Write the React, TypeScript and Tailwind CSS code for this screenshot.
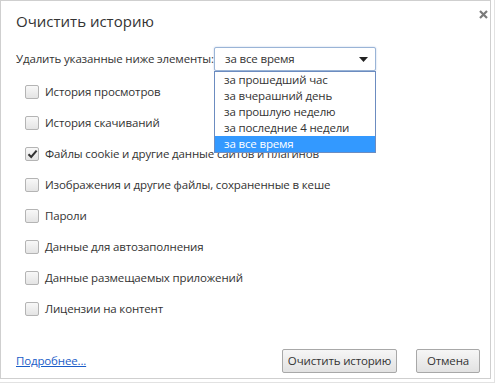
import React, { useState } from "react";

const items: { label: string; checked: boolean }[] = [
  { label: "История просмотров", checked: false },
  { label: "История скачиваний", checked: false },
  { label: "Файлы cookie и другие данные сайтов и плагинов", checked: true },
  { label: "Изображения и другие файлы, сохраненные в кеше", checked: false },
  { label: "Пароли", checked: false },
  { label: "Данные для автозаполнения", checked: false },
  { label: "Данные размещаемых приложений", checked: false },
  { label: "Лицензии на контент", checked: false },
];

const periods = [
  "за прошедший час",
  "за вчерашний день",
  "за прошлую неделю",
  "за последние 4 недели",
  "за все время",
];

const Checkbox: React.FC<{ checked: boolean; onToggle: () => void }> = ({
  checked,
  onToggle,
}) => (
  <button
    type="button"
    onClick={onToggle}
    className="flex h-[14px] w-[14px] shrink-0 items-center justify-center rounded-[2px] border border-[#b4b4b4] bg-gradient-to-b from-[#f8f8f8] to-[#e4e4e4]"
  >
    {checked && (
      <svg width="11" height="10" viewBox="0 0 11 10">
        <path
          d="M1.5 5.2 L4.2 8 L9.6 1.6"
          fill="none"
          stroke="#333"
          strokeWidth="2"
        />
      </svg>
    )}
  </button>
);

export default function App() {
  const [checks, setChecks] = useState<boolean[]>(items.map((i) => i.checked));

  return (
    <div
      className="h-[384px] w-[496px] bg-white text-[#333]"
      style={{ fontFamily: '"Open Sans", "Noto Sans", sans-serif' }}
    >
      <div className="relative h-[383px] w-[495px] border-r border-b border-[#e2e2e2]">
        <div className="relative flex h-[379px] w-[491px] flex-col border border-[#cfcfcf] pl-[15px] pr-[10px] tracking-[-0.15px]">
          <button className="absolute right-[2px] top-[9px]">
            <svg width="9" height="9" viewBox="0 0 9 9">
              <path d="M1 1 L8 8 M8 1 L1 8" stroke="#7a7a7a" strokeWidth="2.2" />
            </svg>
          </button>

          <h1 className="mt-[9px] whitespace-nowrap text-[15px] leading-[22px] tracking-normal text-[#333]">
            Очистить историю
          </h1>

          <div className="mt-[15px] flex items-center whitespace-nowrap text-[11.5px]">
            <span className="w-[198px]">Удалить указанные ниже элементы:</span>
            <div className="relative">
              <div className="flex h-[24px] w-[162px] items-center justify-between rounded-[2px] border border-[#9ab4d6] bg-white pl-[10px] pr-[7px] shadow-[0_0_2px_#b8cbe6]">
                <span>за все время</span>
                <svg width="9" height="5" viewBox="0 0 9 5">
                  <path d="M0 0 H9 L4.5 5 Z" fill="#222" />
                </svg>
              </div>
              <ul className="absolute left-0 top-[24px] z-10 w-[162px] border border-[#6c8cc0] bg-white text-[11.5px] leading-[16px]">
                {periods.map((p, i) => (
                  <li
                    key={p}
                    className={
                      i === periods.length - 1
                        ? "bg-[#3399ff] pl-[9px] text-white"
                        : "pl-[9px] text-[#333]"
                    }
                  >
                    {p}
                  </li>
                ))}
              </ul>
            </div>
          </div>

          <div className="mt-[5px] flex flex-col pl-[9px]">
            {items.map((it, i) => (
              <div
                key={it.label}
                className="flex h-[31px] items-center gap-[6px] whitespace-nowrap text-[11.5px]"
              >
                <Checkbox
                  checked={checks[i]}
                  onToggle={() =>
                    setChecks((c) => c.map((v, j) => (j === i ? !v : v)))
                  }
                />
                <span>{it.label}</span>
              </div>
            ))}
          </div>

          <div className="mt-auto mb-[5px] flex items-center justify-between">
            <a href="#" className="text-[11.5px] text-[#1a5dc8] underline">
              Подробнее...
            </a>
            <div className="flex gap-[19px]">
              <button className="h-[24px] w-[115px] whitespace-nowrap rounded-[2px] border border-[#a8a8a8] bg-gradient-to-b from-[#f6f6f6] to-[#e2e2e2] text-[11.5px] text-[#333]">
                Очистить историю
              </button>
              <button className="h-[24px] w-[64px] whitespace-nowrap rounded-[2px] border border-[#a8a8a8] bg-gradient-to-b from-[#f6f6f6] to-[#e2e2e2] text-[11.5px] text-[#333]">
                Отмена
              </button>
            </div>
          </div>
        </div>
      </div>
    </div>
  );
}
